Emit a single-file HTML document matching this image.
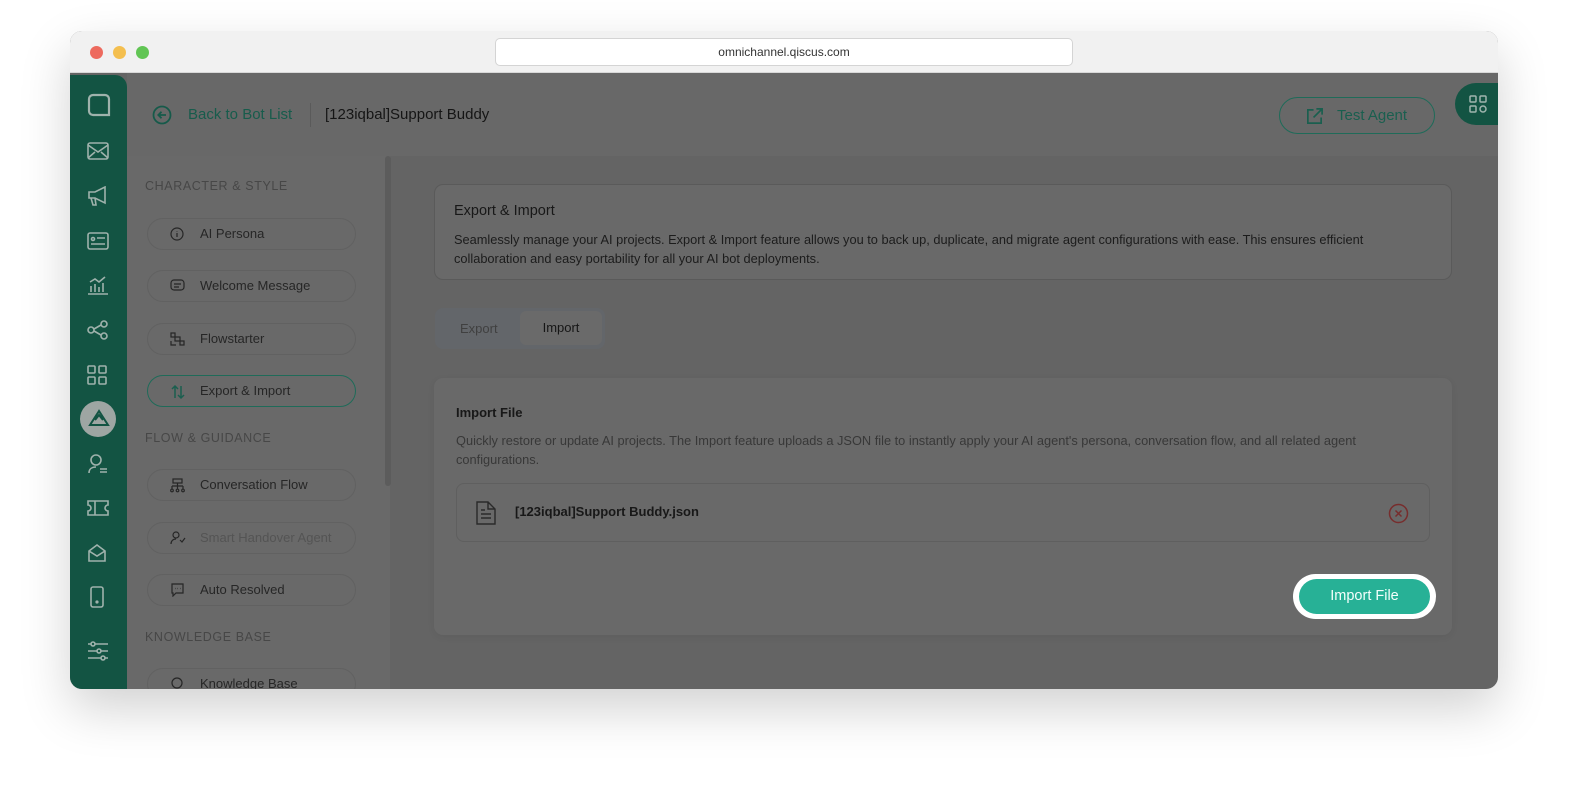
<!DOCTYPE html>
<html><head><meta charset="utf-8"><style>
*{box-sizing:border-box;margin:0;padding:0}
body{width:1580px;height:804px;background:#fff;font-family:"Liberation Sans",sans-serif;position:relative;overflow:hidden}
.win{position:absolute;left:70px;top:31px;width:1428px;height:658px;border-radius:12px;overflow:hidden;background:#646464;box-shadow:0 20px 50px rgba(0,0,0,.18)}
.tb{position:absolute;left:0;top:0;width:100%;height:42px;background:#f1f1f1;border-bottom:1px solid #d8d8d8}
.dot{position:absolute;top:15px;width:13px;height:13px;border-radius:50%}
.url{position:absolute;left:425px;top:7px;width:578px;height:28px;background:#fff;border:1px solid #d4d4d4;border-radius:5px;font-size:12px;color:#333;text-align:center;line-height:26px}
.side{position:absolute;left:0;top:44px;width:57px;height:614px;background:#135443;border-radius:0 12px 0 0}
.side svg{position:absolute;left:17px}
.hdr{position:absolute;left:57px;top:42px;right:0;height:83px;background:#686868}
.nav{position:absolute;left:57px;top:125px;width:263px;height:533px;background:#696969}
.sec{position:absolute;left:75px;font-size:12.5px;letter-spacing:.6px;color:#474747}
.item{position:absolute;left:77px;width:209px;height:32px;border:1px solid #616161;border-radius:16px;font-size:13px;color:#262626;line-height:30px;padding-left:52px}
.item svg{position:absolute;left:22px;top:8px}
.card{position:absolute;background:#696969;border:1px solid #5a5a5a;border-radius:9px}
.t{color:#181818}
</style></head><body>
<div class="win">
 <div class="tb">
  <div class="dot" style="left:20px;background:#ed6a5e"></div>
  <div class="dot" style="left:43px;background:#f4bf4f"></div>
  <div class="dot" style="left:66px;background:#61c554"></div>
  <div class="url">omnichannel.qiscus.com</div>
 </div>
 <div class="hdr">
  <svg style="position:absolute;left:25px;top:32px" width="20" height="20" viewBox="0 0 20 20" fill="none" stroke="#165a4a" stroke-width="1.8"><circle cx="10" cy="10" r="8.5"/><path d="M14 10H6.5M9.5 6.8 6.3 10l3.2 3.2"/></svg>
  <div style="position:absolute;left:61px;top:33px;font-size:15px;color:#175c4c">Back to Bot List</div>
  <div style="position:absolute;left:183px;top:30px;width:1px;height:24px;background:#5a5a5a"></div>
  <div style="position:absolute;left:198px;top:33px;font-size:15px;color:#151515">[123iqbal]Support Buddy</div>
  <div style="position:absolute;left:1152px;top:24px;width:156px;height:37px;border:1px solid #1f6b59;border-radius:19px;font-size:15px;color:#1a5f4f;line-height:35px;padding-left:57px">Test Agent
   <svg style="position:absolute;left:25px;top:9px" width="19" height="19" viewBox="0 0 20 20" fill="none" stroke="#1a5f4f" stroke-width="1.8"><path d="M9 3H3v14h14v-6M12 2h6v6M18 2 9 11"/></svg></div>
  <div style="position:absolute;left:1328px;top:10px;width:60px;height:42px;background:#135443;border-radius:21px 0 0 21px">
   <svg style="position:absolute;left:14px;top:12px" width="18" height="18" viewBox="0 0 18 18" fill="none" stroke="#9fb5ae" stroke-width="1.5"><rect x="1" y="1" width="6" height="6" rx="1"/><rect x="11" y="1" width="6" height="6" rx="1"/><rect x="1" y="11" width="6" height="6" rx="1"/><circle cx="14" cy="14" r="3"/></svg></div>
 </div>
 <div class="side">
  <svg style="top:18px" width="24" height="24" viewBox="0 0 24 24" fill="none" stroke="#9fb2ac" stroke-width="2.2"><path d="M6 2h12a4 4 0 0 1 4 4v16H6a4 4 0 0 1-4-4V6a4 4 0 0 1 4-4z"/></svg>
  <svg style="top:67px" width="22" height="18" viewBox="0 0 22 18" fill="none" stroke="#9fb2ac" stroke-width="1.6"><rect x="1" y="1" width="20" height="16" rx="2"/><path d="M1 3l10 7 10-7M1 16l7-6M21 16l-7-6"/></svg>
  <svg style="top:111px" width="22" height="20" viewBox="0 0 22 20" fill="none" stroke="#9fb2ac" stroke-width="1.6"><path d="M2 6h6l10-5v16L8 12H2zM4 12l2 7h3l-1-7"/></svg>
  <svg style="top:157px" width="22" height="18" viewBox="0 0 22 18" fill="none" stroke="#9fb2ac" stroke-width="1.6"><rect x="1" y="1" width="20" height="16" rx="2"/><circle cx="6" cy="7" r="1.5"/><path d="M10 6h8M4 12h14"/></svg>
  <svg style="top:200px" width="22" height="20" viewBox="0 0 22 20" fill="none" stroke="#9fb2ac" stroke-width="1.6"><path d="M1 19h20M4 17v-6M8 17V9M12 17v-5M16 17V8M3 7l5-3 4 3 6-5"/></svg>
  <svg style="top:245px" width="22" height="20" viewBox="0 0 22 20" fill="none" stroke="#9fb2ac" stroke-width="1.6"><circle cx="4" cy="10" r="3"/><circle cx="17" cy="4" r="3"/><circle cx="17" cy="16" r="3"/><path d="M7 9l7-4M7 11l7 4"/></svg>
  <svg style="top:290px" width="20" height="20" viewBox="0 0 20 20" fill="none" stroke="#9fb2ac" stroke-width="1.6"><rect x="1" y="1" width="7" height="7" rx="1"/><rect x="12" y="1" width="7" height="7" rx="1"/><rect x="1" y="12" width="7" height="7" rx="1"/><rect x="12" y="12" width="7" height="7" rx="1"/></svg>
  <div style="position:absolute;left:10px;top:326px;width:36px;height:36px;border-radius:50%;background:#9ea6a3"></div>
  <svg style="top:334px;left:18px" width="22" height="20" viewBox="0 0 22 20" fill="none" stroke="#135443" stroke-width="2"><path d="M11 2 2 16h18zM7 11l4-5 4 5"/></svg>
  <svg style="top:379px" width="22" height="20" viewBox="0 0 22 20" fill="none" stroke="#9fb2ac" stroke-width="1.6"><circle cx="9" cy="6" r="5"/><path d="M2 19c0-4 3-6 7-6M13 15h7M13 18h7"/></svg>
  <svg style="top:425px" width="22" height="16" viewBox="0 0 22 16" fill="none" stroke="#9fb2ac" stroke-width="1.6"><path d="M1 1h20v4a3 3 0 0 0 0 6v4H1v-4a3 3 0 0 0 0-6zM8 1v14"/></svg>
  <svg style="top:468px" width="20" height="20" viewBox="0 0 20 20" fill="none" stroke="#9fb2ac" stroke-width="1.6"><path d="M2 8l8-6 8 6v10H2zM2 8l8 5 8-5"/></svg>
  <svg style="top:511px" width="20" height="22" viewBox="0 0 20 22" fill="none" stroke="#9fb2ac" stroke-width="1.6"><rect x="4" y="1" width="12" height="20" rx="2"/><circle cx="10" cy="16" r=".8"/></svg>
  <svg style="top:566px" width="22" height="20" viewBox="0 0 22 20" fill="none" stroke="#9fb2ac" stroke-width="1.6"><path d="M1 3h20M1 10h20M1 17h20"/><circle cx="6" cy="3" r="2" fill="#135443"/><circle cx="12" cy="10" r="2" fill="#135443"/><circle cx="16" cy="17" r="2" fill="#135443"/></svg>
 </div>
 <div class="nav"></div>
 <div style="position:absolute;left:315px;top:125px;width:6px;height:330px;background:#5c5c5c;border-radius:3px"></div>
 <div class="sec" style="top:148px">CHARACTER &amp; STYLE</div>
 <div class="item" style="top:187px"><svg width="14" height="14" viewBox="0 0 14 14" fill="none" stroke="#262626" stroke-width="1.2"><circle cx="7" cy="7" r="6"/><path d="M7 6v4M7 4v.5"/></svg>AI Persona</div>
 <div class="item" style="top:239px"><svg width="15" height="14" viewBox="0 0 15 14" fill="none" stroke="#262626" stroke-width="1.2"><rect x="1" y="1" width="13" height="10" rx="3"/><path d="M4 5h7M4 8h5"/></svg>Welcome Message</div>
 <div class="item" style="top:292px"><svg width="15" height="14" viewBox="0 0 15 14" fill="none" stroke="#262626" stroke-width="1.2"><rect x="1" y="1" width="4" height="4"/><rect x="5" y="5" width="5" height="4"/><rect x="10" y="9" width="4" height="4"/><path d="M1 9v4h5"/></svg>Flowstarter</div>
 <div class="item" style="top:344px;border-color:#1f6b59"><svg width="16" height="16" viewBox="0 0 16 16" fill="none" stroke="#1a5f4f" stroke-width="1.5"><path d="M5 14V2M2 5l3-3 3 3M11 2v12M8 11l3 3 3-3"/></svg>Export &amp; Import</div>
 <div class="sec" style="top:400px">FLOW &amp; GUIDANCE</div>
 <div class="item" style="top:438px"><svg width="15" height="15" viewBox="0 0 15 15" fill="none" stroke="#262626" stroke-width="1.2"><rect x="3" y="1" width="9" height="4"/><path d="M7.5 5v3M2 8h11M2 8v3M7.5 8v3M13 8v3"/><circle cx="2" cy="12.5" r="1.3"/><circle cx="7.5" cy="12.5" r="1.3"/><circle cx="13" cy="12.5" r="1.3"/></svg>Conversation Flow</div>
 <div class="item" style="top:491px;color:#545454"><svg width="16" height="14" viewBox="0 0 16 14" fill="none" stroke="#262626" stroke-width="1.2"><circle cx="6" cy="4" r="3"/><path d="M1 13c0-3 2-5 5-5M10 9l2 2 3-4"/></svg>Smart Handover Agent</div>
 <div class="item" style="top:543px"><svg width="15" height="14" viewBox="0 0 15 14" fill="none" stroke="#262626" stroke-width="1.2"><path d="M2 1h11v9H6l-3 3v-3H2zM5 5.5h.5M7.5 5.5H8M10 5.5h.5"/></svg>Auto Resolved</div>
 <div class="sec" style="top:599px">KNOWLEDGE BASE</div>
 <div class="item" style="top:637px"><svg width="14" height="14" viewBox="0 0 14 14" fill="none" stroke="#262626" stroke-width="1.2"><circle cx="7" cy="6" r="5"/></svg>Knowledge Base</div>

 <div class="card" style="left:364px;top:153px;width:1018px;height:96px">
  <div class="t" style="position:absolute;left:19px;top:18px;font-size:14.5px">Export &amp; Import</div>
  <div style="position:absolute;left:19px;top:45px;font-size:12.8px;line-height:19px;color:#1c1c1c;width:975px">Seamlessly manage your AI projects. Export &amp; Import feature allows you to back up, duplicate, and migrate agent configurations with ease. This ensures efficient collaboration and easy portability for all your AI bot deployments.</div>
 </div>
 <div style="position:absolute;left:365px;top:277px;width:170px;height:41px;background:#63666a;border-radius:8px">
  <div style="position:absolute;left:25px;top:13px;font-size:13px;color:#404040">Export</div>
  <div style="position:absolute;left:85px;top:3px;width:82px;height:34px;background:#6a6a6a;border-radius:6px;font-size:13px;color:#161616;text-align:center;line-height:34px">Import</div>
 </div>
 <div style="position:absolute;left:364px;top:347px;width:1018px;height:257px;background:#696969;border-radius:9px;box-shadow:0 2px 8px rgba(0,0,0,.06)">
  <div class="t" style="position:absolute;left:22px;top:27px;font-size:13px;font-weight:bold">Import File</div>
  <div style="position:absolute;left:22px;top:53px;font-size:12.8px;line-height:19px;color:#383838;width:950px">Quickly restore or update AI projects. The Import feature uploads a JSON file to instantly apply your AI agent's persona, conversation flow, and all related agent configurations.</div>
  <div style="position:absolute;left:22px;top:105px;width:974px;height:59px;border:1px solid #5f5f5f;border-radius:8px">
   <svg style="position:absolute;left:18px;top:16px" width="22" height="26" viewBox="0 0 22 26" fill="none" stroke="#2a2a2a" stroke-width="1.4"><path d="M2 2h11l7 7v15H2zM13 2v7h7M6 14h10M6 18h10M6 10h4"/></svg>
   <div class="t" style="position:absolute;left:58px;top:20px;font-size:13px;font-weight:bold">[123iqbal]Support Buddy.json</div>
   <svg style="position:absolute;left:931px;top:19px" width="21" height="21" viewBox="0 0 21 21" fill="none" stroke="#772d2d" stroke-width="1.5"><circle cx="10.5" cy="10.5" r="9"/><path d="M7.5 7.5l6 6M13.5 7.5l-6 6"/></svg>
  </div>
  <div style="position:absolute;left:859px;top:196px;width:143px;height:45px;border-radius:23px;background:#fff"></div>
  <div style="position:absolute;left:865px;top:201px;width:131px;height:35px;border-radius:18px;background:#27b196;color:#f4fffc;font-size:14.5px;text-align:center;line-height:35px">Import File</div>
 </div>
</div>
</body></html>
